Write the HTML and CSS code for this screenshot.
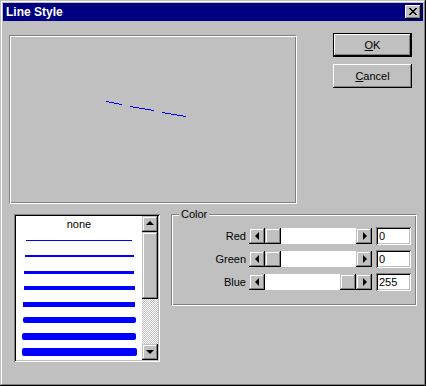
FILE: index.html
```html
<!DOCTYPE html>
<html lang="en">
<head>
    <meta charset="UTF-8">
    <title>Line Style</title>
    <link rel="stylesheet" href="styles.css">
</head>
<body>
    <div class="window">
        <div class="titlebar">
            <span class="title">Line Style</span>
            <button class="close" aria-label="Close">
                <svg width="8" height="7" viewBox="0 0 8 7" shape-rendering="crispEdges">
                    <path d="M0 0h2v1h-2zM6 0h2v1h-2zM1 1h2v1h-2zM5 1h2v1h-2zM2 2h4v1h-4zM3 3h2v1h-2zM2 4h4v1h-4zM1 5h2v1h-2zM5 5h2v1h-2zM0 6h2v1h-2zM6 6h2v1h-2z" fill="#000"/>
                </svg>
            </button>
        </div>

        <div class="top-row">
            <div class="preview etched">
                <svg width="284" height="165" shape-rendering="crispEdges">
                    <!-- preview area starts at x=11, y=37 of the window -->
                    <g stroke="#0000ff" stroke-width="1">
                        <line x1="95" y1="64.5" x2="111" y2="67.5"/>
                        <line x1="119" y1="69.5" x2="143" y2="73.5"/>
                        <line x1="151" y1="75.5" x2="175" y2="79.5"/>
                    </g>
                </svg>
            </div>
            <div class="buttons">
                <button class="btn btn-default"><u>O</u>K</button>
                <button class="btn"><u>C</u>ancel</button>
            </div>
        </div>

        <div class="bottom-row">
            <div class="listbox sunken">
                <div class="items">
                    <div class="item">none</div>
                    <div class="item"><div class="stroke s1"></div></div>
                    <div class="item"><div class="stroke s2"></div></div>
                    <div class="item"><div class="stroke s3"></div></div>
                    <div class="item"><div class="stroke s4"></div></div>
                    <div class="item"><div class="stroke s5"></div></div>
                    <div class="item"><div class="stroke s6 round"></div></div>
                    <div class="item"><div class="stroke s7 round"></div></div>
                    <div class="item"><div class="stroke s8 round"></div></div>
                </div>
                <div class="vscroll">
                    <div class="sb-btn"><span class="arrow up"></span></div>
                    <div class="sb-thumb v-thumb"></div>
                    <div class="v-track"></div>
                    <div class="sb-btn"><span class="arrow down"></span></div>
                </div>
            </div>

            <div class="group etched">
                <span class="group-label">Color</span>
                <div class="color-row">
                    <span class="label">Red</span>
                    <div class="hscroll">
                        <div class="sb-btn"><span class="arrow left"></span></div>
                        <div class="h-track"><div class="sb-thumb h-thumb"></div></div>
                        <div class="sb-btn"><span class="arrow right"></span></div>
                    </div>
                    <div class="edit sunken">0</div>
                </div>
                <div class="color-row">
                    <span class="label">Green</span>
                    <div class="hscroll">
                        <div class="sb-btn"><span class="arrow left"></span></div>
                        <div class="h-track"><div class="sb-thumb h-thumb"></div></div>
                        <div class="sb-btn"><span class="arrow right"></span></div>
                    </div>
                    <div class="edit sunken">0</div>
                </div>
                <div class="color-row">
                    <span class="label">Blue</span>
                    <div class="hscroll">
                        <div class="sb-btn"><span class="arrow left"></span></div>
                        <div class="h-track at-end"><div class="sb-thumb h-thumb"></div></div>
                        <div class="sb-btn"><span class="arrow right"></span></div>
                    </div>
                    <div class="edit sunken">255</div>
                </div>
            </div>
        </div>
    </div>
</body>
</html>
```

FILE: styles.css
```css
body {
    margin: 0;
    background-color: #c0c0c0;
    font-family: "Liberation Sans", Arial, sans-serif;
    font-size: 11px;
    color: #000;
}
.window {
    width: 426px;
    height: 386px;
    box-sizing: border-box;
    padding: 3px;
    background-color: #c0c0c0;
    box-shadow: inset -1px -1px #000, inset 1px 1px #c0c0c0, inset -2px -2px #808080, inset 2px 2px #fff;
}
.titlebar {
    height: 18px;
    background-color: #000080;
    display: flex;
    align-items: center;
    justify-content: space-between;
    padding-left: 3px;
}
.title {
    color: #fff;
    font-weight: bold;
    font-size: 12px;
}
.close {
    width: 16px;
    height: 14px;
    margin-right: 2px;
    padding: 0;
    border: none;
    background-color: #c0c0c0;
    display: flex;
    align-items: center;
    justify-content: center;
    box-shadow: inset -1px -1px #000, inset 1px 1px #fff, inset -2px -2px #808080, inset 2px 2px #c0c0c0;
}
.close svg {
    display: block;
    margin: 0 1px 1px 0;
}

.etched {
    border: 1px solid;
    border-color: #808080 #fff #fff #808080;
    box-shadow: inset 1px 1px #fff, inset -1px -1px #808080;
}
.sunken {
    background-color: #fff;
    box-shadow: inset 1px 1px #808080, inset -1px -1px #fff, inset 2px 2px #000, inset -2px -2px #c0c0c0;
}

.top-row {
    display: flex;
    margin-top: 12px;
}
.preview {
    width: 288px;
    height: 169px;
    box-sizing: border-box;
    margin-top: 2px;
    margin-left: 6px;
    padding: 1px;
}
.preview svg {
    display: block;
}
.buttons {
    display: flex;
    flex-direction: column;
    gap: 7px;
    margin-left: 36px;
}
.btn {
    width: 79px;
    height: 24px;
    padding: 0;
    border: none;
    background-color: #c0c0c0;
    font-family: "Liberation Sans", Arial, sans-serif;
    font-size: 11px;
    color: #000;
    box-shadow: inset -1px -1px #000, inset 1px 1px #fff, inset -2px -2px #808080, inset 2px 2px #c0c0c0;
}
.btn-default {
    box-shadow: inset 0 0 0 1px #000, inset -2px -2px #000, inset 2px 2px #fff, inset -3px -3px #808080;
}

.bottom-row {
    display: flex;
    align-items: flex-start;
    margin-top: 10px;
}
.listbox {
    width: 146px;
    height: 148px;
    box-sizing: border-box;
    padding: 2px;
    margin-left: 11px;
    display: flex;
}
.items {
    flex: 1;
}
.item {
    height: 16px;
    display: flex;
    align-items: center;
    justify-content: center;
}
.stroke {
    background-color: #0000ff;
}
.s1 { width: 106px; height: 1px; }
.s2 { width: 109px; height: 2px; }
.s3 { width: 110px; height: 3px; }
.s4 { width: 111px; height: 4px; }
.s5 { width: 112px; height: 5px; }
.s6 { width: 113px; height: 6px; }
.s7 { width: 114px; height: 7px; }
.s8 { width: 115px; height: 8px; }
.round {
    border-radius: 2px;
}

.vscroll {
    width: 16px;
    display: flex;
    flex-direction: column;
}
.sb-btn, .sb-thumb {
    width: 16px;
    height: 16px;
    flex: none;
    background-color: #c0c0c0;
    box-shadow: inset -1px -1px #000, inset 1px 1px #c0c0c0, inset -2px -2px #808080, inset 2px 2px #fff;
    display: flex;
    align-items: center;
    justify-content: center;
}
.v-thumb {
    height: 67px;
}
.v-track {
    flex: 1;
    background: repeating-conic-gradient(#fff 0 25%, #c0c0c0 0 50%) 0 0 / 2px 2px;
}
.arrow {
    width: 0;
    height: 0;
    border: 4px solid transparent;
}
.arrow.up {
    border-top: 0;
    border-bottom-color: #000;
    margin: 0 1px 2px 0;
}
.arrow.down {
    border-bottom: 0;
    border-top-color: #000;
    margin: 0 1px 0 0;
}
.arrow.left {
    border-left: 0;
    border-right-color: #000;
    margin: 0 1px 1px 0;
}
.arrow.right {
    border-right: 0;
    border-left-color: #000;
    margin: 0 0 1px 1px;
}

.group {
    position: relative;
    width: 246px;
    height: 92px;
    box-sizing: border-box;
    margin-left: 11px;
    padding: 12px 5px 0 0;
    display: flex;
    flex-direction: column;
    gap: 5px;
}
.group-label {
    position: absolute;
    top: -7px;
    left: 7px;
    padding: 0 2px;
    background-color: #c0c0c0;
}
.color-row {
    display: flex;
    align-items: center;
    height: 18px;
}
.label {
    flex: 1;
    text-align: right;
    margin-right: 3px;
}
.hscroll {
    width: 123px;
    height: 16px;
    display: flex;
}
.h-track {
    flex: 1;
    background-color: #fff;
    display: flex;
}
.h-track.at-end {
    justify-content: flex-end;
}
.edit {
    width: 35px;
    height: 18px;
    box-sizing: border-box;
    margin-left: 4px;
    padding: 3px 3px 0;
    line-height: 13px;
}
```
